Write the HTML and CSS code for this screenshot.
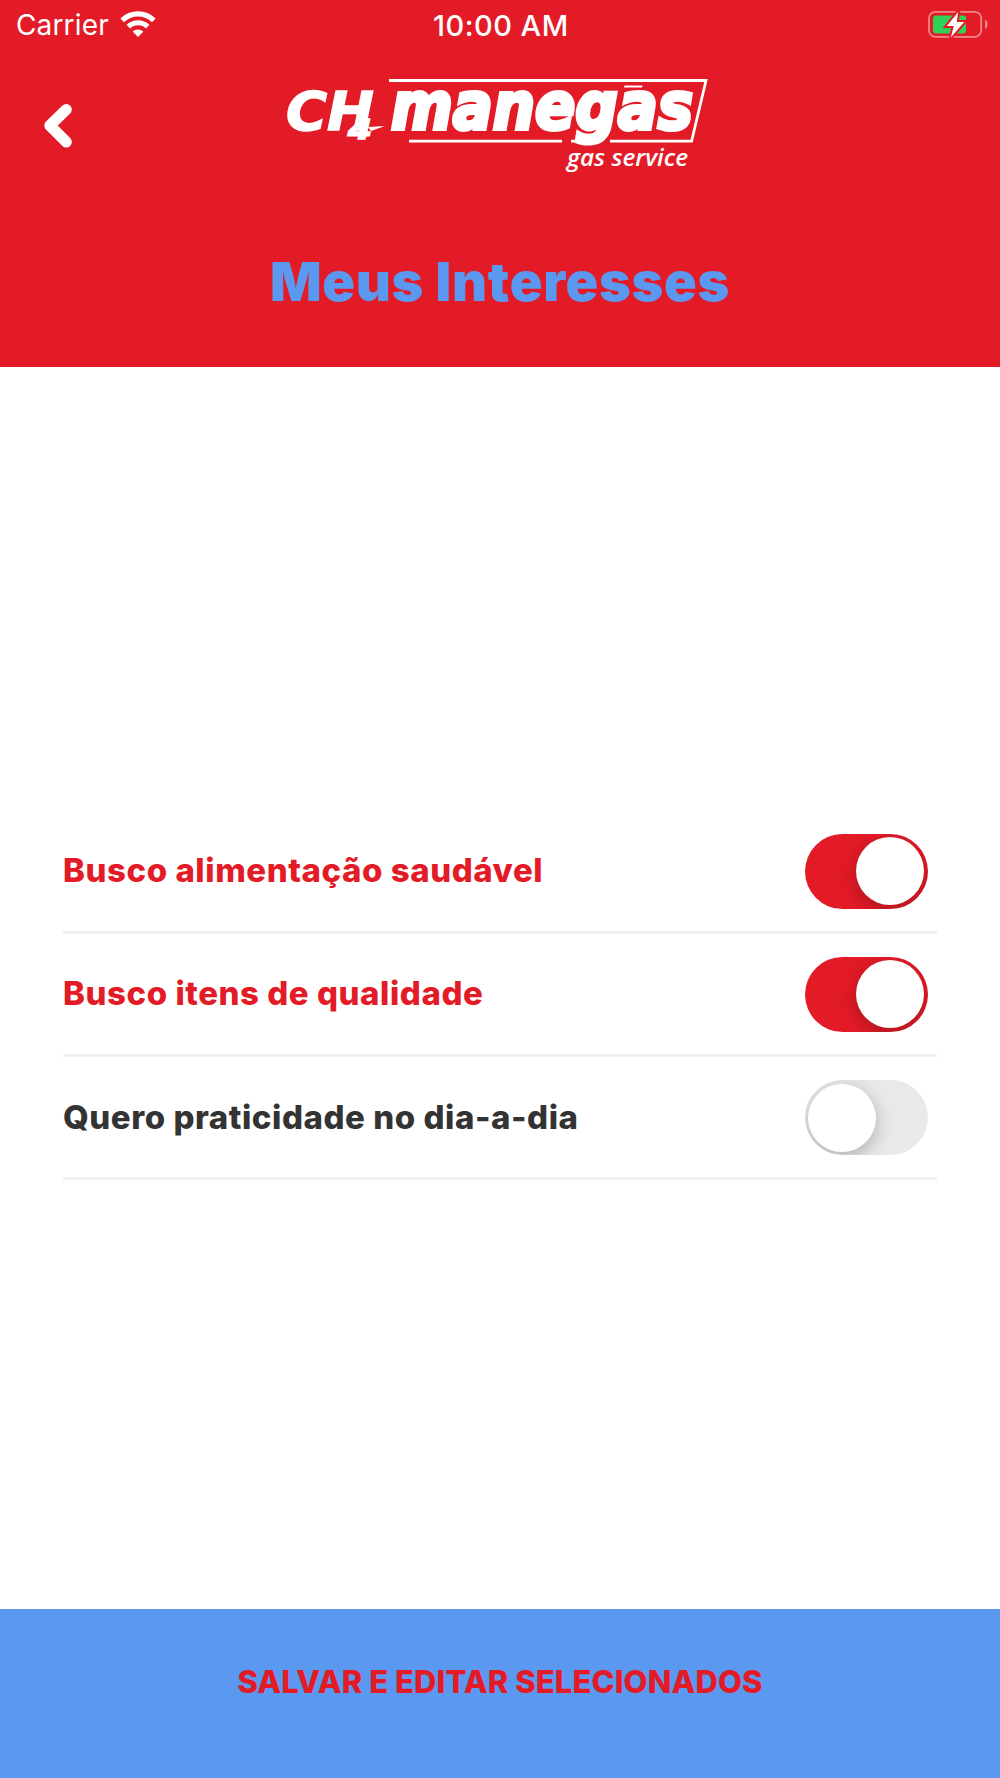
FILE: index.html
```html
<!DOCTYPE html>
<html lang="pt-BR">
<head>
<meta charset="utf-8">
<title>Meus Interesses</title>
<link rel="stylesheet" href="styles.css">
</head>
<body>
<div class="app">
  <header class="header">
    <div class="status">
      <div class="status-left">
        <span class="carrier">Carrier</span>
        <svg class="wifi" width="36" height="28" viewBox="0 0 36 28" fill="none" stroke="#fff">
          <path d="M2.2 10.3a22.7 22.7 0 0 1 31.6 0" stroke-width="5.2"/>
          <path d="M8.3 16.6a14 14 0 0 1 19.4 0" stroke-width="5"/>
          <path d="M12.6 21.6a8 8 0 0 1 10.8 0L18 27z" fill="#fff" stroke="none"/>
        </svg>
      </div>
      <span class="time">10:00 AM</span>
      <svg class="battery" width="62" height="30" viewBox="0 0 62 30">
        <rect x="2" y="2.8" width="52.2" height="25" rx="6.5" fill="none" stroke="#f1858b" stroke-width="1.8"/>
        <path d="M58 10.5c3.6 2 3.6 7.6 0 9.6z" fill="#f1858b"/>
        <rect x="6" y="6.5" width="33" height="18" rx="3" fill="#30d158"/>
        <path d="M31.2 3L19.8 17h7L23.8 28.5 37.2 13h-7.4z" fill="#fff" stroke="#e31b27" stroke-width="4" paint-order="stroke"/>
      </svg>
    </div>
    <div class="nav">
      <svg class="back" width="30" height="46" viewBox="0 0 30 46" fill="none" stroke="#fff" stroke-width="11" stroke-linecap="round" stroke-linejoin="round">
        <path d="M24.3 6.5L7.8 22.5l16.5 16.5"/>
      </svg>
      <svg class="logo" width="430" height="100" viewBox="280 75 430 100" fill="#fff">
        <path d="M389 80.5H706L691.6 141.2H610M409 141.2H562M571 141.2H600" fill="none" stroke="#fff" stroke-width="2.8"/>
        <g class="logo-main">
          <text x="286" y="130" font-size="54" textLength="88" lengthAdjust="spacingAndGlyphs">CH</text>
          <text x="348" y="138.500" font-size="26" textLength="24" lengthAdjust="spacingAndGlyphs">4</text>
          <text class="logo-name" x="391" y="129.300" font-size="65" textLength="302" lengthAdjust="spacingAndGlyphs">manegas</text>
        </g>
        <path d="M368 127L385 126 371 131zM624.500 85.500h18l-.5 2h-18z"/>
        <text class="logo-sub" x="567" y="166" font-size="23" textLength="121" lengthAdjust="spacingAndGlyphs">gas service</text>
      </svg>
    </div>
    <h1 class="title">Meus Interesses</h1>
  </header>
  <main class="content">
    <div class="row on"><span class="label">Busco alimentação saudável</span><span class="toggle"><span class="knob"></span></span></div>
    <div class="row on"><span class="label">Busco itens de qualidade</span><span class="toggle"><span class="knob"></span></span></div>
    <div class="row"><span class="label">Quero praticidade no dia-a-dia</span><span class="toggle"><span class="knob"></span></span></div>
  </main>
  <footer class="save">SALVAR E EDITAR SELECIONADOS</footer>
</div>
</body>
</html>
```
FILE: styles.css
```css
* { box-sizing: border-box; }
body { margin: 0; font-family: Inter, sans-serif; background: #fff; }
.app { width: 1000px; height: 1778px; display: flex; flex-direction: column; }
.header { height: 367px; flex: none; background: #e31b27; }
.status {
  height: 50px; padding: 0 11.5px 0 16px; color: #fff; font: 28px/51px Inter, sans-serif;
  display: grid; grid-template-columns: 1fr auto 1fr; align-items: start;
}
.status-left { display: flex; }
.carrier { letter-spacing: .15px; }
.wifi { margin: 10px 0 0 11px; }
.time { font-size: 29px; font-weight: 500; letter-spacing: .5px; line-height: 51px; margin-right: 3px; }
.battery { justify-self: end; margin-top: 9px; }
.nav { height: 130px; padding: 25px 0 0 42px; display: flex; align-items: flex-start; }
.back { margin-top: 28px; }
.logo { margin-left: 208px; }
.logo-main { font-family: "DejaVu Sans", sans-serif; font-weight: 700; font-style: italic; stroke: #fff; stroke-width: 1.5px; }
.logo-name { stroke-width: 4px; }
.logo-sub { font-family: "Open Sans", sans-serif; font-weight: 600; font-style: italic; }
.title { margin: 70px 0 0; text-align: center; color: #5b98f0; font-size: 54px; line-height: 64px; font-weight: 900; letter-spacing: .75px; }
.content { flex: 1; padding: 443.5px 63px 0 63px; }
.row { height: 123.3px; border-bottom: 3px solid #f1f1f1; display: flex; align-items: center; justify-content: space-between; padding: 1px 9px 0 0; }
.label { font-size: 33px; line-height: 40px; font-weight: 800; color: #333; margin-top: -2px; letter-spacing: .55px; }
.on .label { color: #e31b27; }
.toggle { width: 123.5px; height: 75px; border-radius: 38px; background: #e9e9e9; overflow: hidden; padding: 3.5px 4px 3.5px 3.5px; display: flex; }
.knob { width: 68px; height: 68px; border-radius: 50%; background: #fff; box-shadow: 0 5px 18px rgba(0, 0, 0, .25); }
.on .toggle { background: #e31b27; justify-content: flex-end; }
.save { height: 169px; flex: none; background: #5b98f0; color: #e31b27; text-align: center; font-size: 31px; font-weight: 800; line-height: 146px; letter-spacing: .1px; }
```
